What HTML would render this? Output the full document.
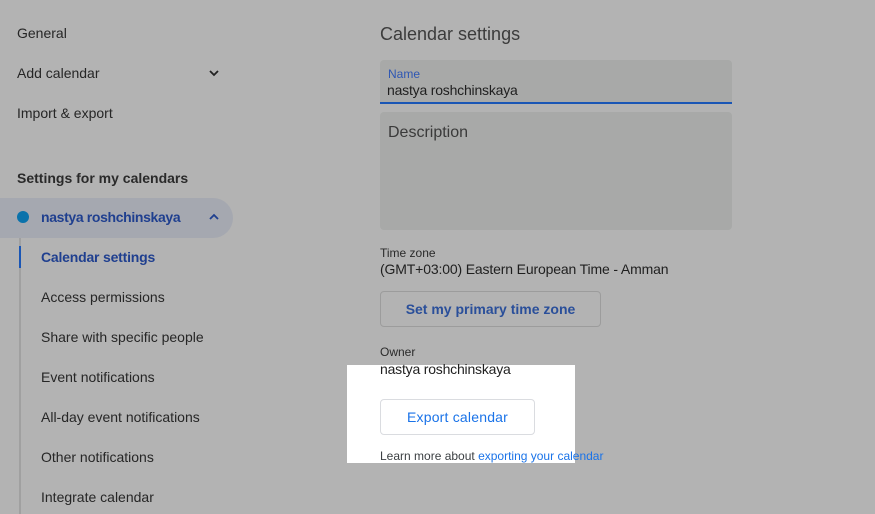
<!DOCTYPE html>
<html><head><style>
body{margin:0;width:875px;height:514px;overflow:hidden;background:#b3b3b3;font-family:"Liberation Sans",Arial,sans-serif;color:#1f1f1f;position:relative}
.a{position:absolute;white-space:nowrap}
.nav{font-size:14px;color:#262626}
</style></head><body>
<div class="a nav" style="left:17px;top:25px">General</div>
<div class="a nav" style="left:17px;top:65px">Add calendar</div>
<svg class="a" style="left:208px;top:68px" width="12" height="10"><path d="M2 3l4 4 4-4" stroke="#222" stroke-width="1.8" fill="none"/></svg>
<div class="a nav" style="left:17px;top:105px">Import &amp; export</div>
<div class="a nav" style="left:17px;top:170px;font-weight:bold;color:#2a2a2a">Settings for my calendars</div>
<div class="a" style="left:0;top:198px;width:233px;height:40px;background:#a5a8b0;border-radius:0 20px 20px 0"></div>
<div class="a" style="left:17px;top:211px;width:12px;height:12px;border-radius:50%;background:#0a72ab"></div>
<div class="a nav" style="left:41px;top:209px;font-weight:bold;color:#1f3f8f;letter-spacing:-0.35px">nastya roshchinskaya</div>
<svg class="a" style="left:208px;top:212px" width="12" height="10"><path d="M2 7l4-4 4 4" stroke="#1f3f8f" stroke-width="1.8" fill="none"/></svg>
<div class="a" style="left:19px;top:238px;width:2px;height:276px;background:#a0a0a0"></div>
<div class="a" style="left:19px;top:246px;width:2px;height:22px;background:#1a56b5"></div>
<div class="a nav" style="left:41px;top:249px;color:#1f3f8f;font-weight:bold;letter-spacing:-0.2px">Calendar settings</div>
<div class="a nav" style="left:41px;top:289px">Access permissions</div>
<div class="a nav" style="left:41px;top:329px">Share with specific people</div>
<div class="a nav" style="left:41px;top:369px">Event notifications</div>
<div class="a nav" style="left:41px;top:409px">All-day event notifications</div>
<div class="a nav" style="left:41px;top:449px">Other notifications</div>
<div class="a nav" style="left:41px;top:489px">Integrate calendar</div>

<div class="a" style="left:380px;top:24px;font-size:18px;color:#3c3c3c">Calendar settings</div>
<div class="a" style="left:380px;top:60px;width:352px;height:42px;background:#a8a9a8;border-radius:4px 4px 0 0;border-bottom:2px solid #1a56b5"></div>
<div class="a" style="left:388px;top:67px;font-size:12px;color:#2f57b3">Name</div>
<div class="a" style="left:387px;top:82px;font-size:14px;color:#1f1f1f;letter-spacing:-0.2px">nastya roshchinskaya</div>
<div class="a" style="left:380px;top:112px;width:352px;height:118px;background:#a8a9a8;border-radius:4px"></div>
<div class="a" style="left:388px;top:124px;font-size:16px;color:#3a3a3a">Description</div>
<div class="a" style="left:380px;top:246px;font-size:12px;color:#2a2a2a">Time zone</div>
<div class="a" style="left:380px;top:261px;font-size:14px;color:#1f1f1f;letter-spacing:-0.15px">(GMT+03:00) Eastern European Time - Amman</div>
<div class="a" style="left:380px;top:291px;width:219px;height:34px;border:1px solid #9c9c9c;border-radius:4px"></div>
<div class="a" style="left:380px;top:301px;width:221px;text-align:center;font-size:14px;font-weight:bold;color:#2a4f9a">Set my primary time zone</div>
<div class="a" style="left:380px;top:345px;font-size:12px;color:#2a2a2a">Owner</div>
<div class="a" style="left:347px;top:365px;width:228px;height:98px;background:#fff"></div>
<div class="a" style="left:380px;top:361px;font-size:14px;color:#1f1f1f;letter-spacing:-0.2px">nastya roshchinskaya</div>
<div class="a" style="left:380px;top:399px;width:153px;height:34px;border:1px solid #dadce0;border-radius:4px"></div>
<div class="a" style="left:380px;top:409px;width:155px;text-align:center;font-size:14px;color:#1a73e8;letter-spacing:.2px">Export calendar</div>
<div class="a" style="left:380px;top:449px;font-size:12px;color:#3c4043">Learn more about <span style="color:#1a73e8">exporting your calendar</span></div>
</body></html>
